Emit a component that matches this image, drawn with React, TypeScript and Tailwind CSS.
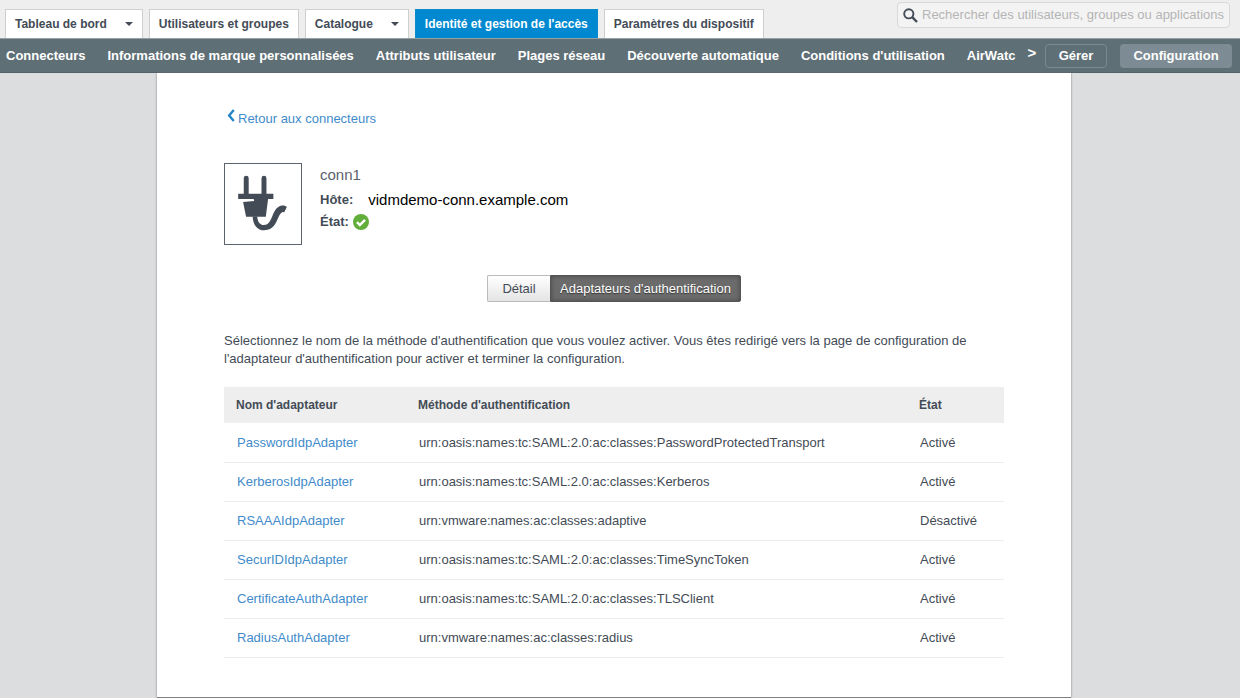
import { clsx } from "clsx";

interface Tab {
  label: string;
  menu?: boolean;
  active?: boolean;
}

interface Adapter {
  name: string;
  method: string;
  enabled: boolean;
}

const TABS: Tab[] = [
  { label: "Tableau de bord", menu: true },
  { label: "Utilisateurs et groupes" },
  { label: "Catalogue", menu: true },
  { label: "Identité et gestion de l'accès", active: true },
  { label: "Paramètres du dispositif" },
];

const SUB_NAV = [
  "Connecteurs",
  "Informations de marque personnalisées",
  "Attributs utilisateur",
  "Plages réseau",
  "Découverte automatique",
  "Conditions d'utilisation",
  "AirWatc",
];

const ADAPTERS: Adapter[] = [
  { name: "PasswordIdpAdapter", method: "urn:oasis:names:tc:SAML:2.0:ac:classes:PasswordProtectedTransport", enabled: true },
  { name: "KerberosIdpAdapter", method: "urn:oasis:names:tc:SAML:2.0:ac:classes:Kerberos", enabled: true },
  { name: "RSAAAIdpAdapter", method: "urn:vmware:names:ac:classes:adaptive", enabled: false },
  { name: "SecurIDIdpAdapter", method: "urn:oasis:names:tc:SAML:2.0:ac:classes:TimeSyncToken", enabled: true },
  { name: "CertificateAuthAdapter", method: "urn:oasis:names:tc:SAML:2.0:ac:classes:TLSClient", enabled: true },
  { name: "RadiusAuthAdapter", method: "urn:vmware:names:ac:classes:radius", enabled: true },
];

function PlugIcon() {
  return (
    <svg viewBox="0 0 231 240" className="h-full w-full" fill="#434b56" aria-hidden="true">
      <path d="M57 91V42a7.500 7.500 0 0 1 15 0v49zM111 91V42a7.500 7.500 0 0 1 15 0v49z" />
      <path d="M40 89h107v16h-16l-7 54H64l-9-45 34-3-2-6H40z" />
      <path d="M84 158c1 27 16 42 34 42 21 0 33-12 41-32 6-15 10-21 16-24l5 1 8-16c-7-5-17-6-25-1-10 6-15 18-20 31-6 15-12 25-25 25-11 0-19-9-20-26z" />
    </svg>
  );
}

function TopTabs() {
  return (
    <nav className="flex items-end gap-[6px] pt-[9px] pl-[5px]">
      {TABS.map((tab) => (
        <button
          key={tab.label}
          className={clsx(
            "flex h-[29px] items-center border border-b-0 px-[9px] text-[12px] font-bold whitespace-nowrap",
            tab.active
              ? "border-[#0a8bcd] bg-[#0089d0] text-white"
              : "border-[#cfcfcf] bg-white text-[#434b56]",
          )}
        >
          {tab.label}
          {tab.menu && (
            <svg viewBox="0 0 8 4" className="ml-[18px] h-1 w-2" fill="#434b56" aria-hidden="true">
              <path d="M0 0h8L4 4z" />
            </svg>
          )}
        </button>
      ))}
    </nav>
  );
}

function SearchBox() {
  return (
    <label className="mt-[2px] mr-[10px] flex h-[26px] w-[333px] items-center gap-1 rounded-[4px] border border-[#d9d9d9] bg-[#f3f3f3] pl-[5px]">
      <svg viewBox="0 0 15 15" className="h-[15px] w-[15px] shrink-0" fill="none" stroke="#434b56" aria-hidden="true">
        <circle cx="5.8" cy="5.8" r="4.6" strokeWidth="1.9" />
        <path d="M9.2 9.2l4.8 4.8" strokeWidth="2.4" />
      </svg>
      <input
        type="text"
        aria-label="Rechercher"
        placeholder="Rechercher des utilisateurs, groupes ou applications"
        className="min-w-0 flex-1 bg-transparent text-[13px] outline-none placeholder:text-[#b5b5b5]"
      />
    </label>
  );
}

function SubNav() {
  return (
    <div className="flex h-[35px] items-center border-t border-b border-t-[#97a1a5] border-b-[#51616a] bg-[#5f6f76] pr-2 pl-[6px] text-[13px] font-bold text-white">
      <nav className="flex gap-[22px] whitespace-nowrap">
        {SUB_NAV.map((item) => (
          <a key={item} href="#">
            {item}
          </a>
        ))}
      </nav>
      <button className="ml-3 pb-1 text-[15px]" aria-label="Suivant">&gt;</button>
      <div className="ml-auto flex gap-[13px]">
        <button className="h-6 w-[62px] rounded-[4px] border border-[#7b8a91]">Gérer</button>
        <button className="h-6 w-[112px] rounded-[4px] bg-[#7d8c94]">Configuration</button>
      </div>
    </div>
  );
}

function ConnectorSummary() {
  return (
    <section className="mt-[35px] flex gap-[18px]">
      <div className="h-[82px] w-[78px] border border-[#5c636d]">
        <PlugIcon />
      </div>
      <div className="text-[#434b56]">
        <h1 className="text-[15px] leading-6 text-[#5a616b]">conn1</h1>
        <dl className="mt-[2px] text-[13px] leading-[22px]">
          <div className="flex gap-[15px]">
            <dt className="font-bold">Hôte:</dt>
            <dd className="text-[15px] text-black">vidmdemo-conn.example.com</dd>
          </div>
          <div className="flex items-center gap-1">
            <dt className="font-bold">État:</dt>
            <dd>
              <svg viewBox="0 0 16 16" className="h-4 w-4" role="img" aria-label="OK">
                <circle cx="8" cy="8" r="8" fill="#62ae3a" />
                <path d="M4 8.2l2.8 2.8L12 5.8" fill="none" stroke="#fff" strokeWidth="2.4" />
              </svg>
            </dd>
          </div>
        </dl>
      </div>
    </section>
  );
}

function AdapterTable() {
  return (
    <table className="mt-[19px] w-full table-fixed text-left text-[13px]">
      <colgroup>
        <col className="w-[182px]" />
        <col />
        <col className="w-[97px]" />
      </colgroup>
      <thead>
        <tr className="h-9 bg-[#eeeeee] text-[12px]">
          <th className="px-3">Nom d'adaptateur</th>
          <th className="px-3">Méthode d'authentification</th>
          <th className="px-3">État</th>
        </tr>
      </thead>
      <tbody>
        {ADAPTERS.map((a) => (
          <tr key={a.name} className="h-[39px] border-b border-[#ececec]">
            <td className="px-[13px]">
              <a href="#" className="text-[#428bca]">{a.name}</a>
            </td>
            <td className="px-[13px]">{a.method}</td>
            <td className="px-[13px]">{a.enabled ? "Activé" : "Désactivé"}</td>
          </tr>
        ))}
      </tbody>
    </table>
  );
}

export default function App() {
  return (
    <div className="min-h-screen bg-[#dcdddf] font-['Liberation_Sans',Arial,sans-serif] text-[#434b56]">
      <header>
        <div className="flex items-start justify-between bg-[#eeeeee]">
          <TopTabs />
          <SearchBox />
        </div>
        <SubNav />
      </header>

      <div className="pr-3">
        <main className="mx-auto max-w-[914px] border-b border-[#808080] bg-white px-[67px] pt-9 pb-[39px] shadow-[0_0_2px_#777]">
          <a href="#" className="flex items-center gap-[3px] pl-[3px] text-[13px] leading-[18px] text-[#428bca]">
            <svg viewBox="0 0 8 14" className="mb-[6px] h-[13px] w-2" fill="none" stroke="#2385c8" strokeWidth="2.6" aria-hidden="true">
              <path d="M7 1L2 7l5 6" />
            </svg>
            Retour aux connecteurs
          </a>

          <ConnectorSummary />

          <div className="mt-[30px] flex justify-center text-[13px]">
            <button className="h-[27px] w-[63px] rounded-l-[2px] border border-r-0 border-[#bbbbbb] bg-linear-to-b from-white to-[#e4e4e4]">
              Détail
            </button>
            <button className="h-[27px] w-[191px] rounded-r-[2px] border border-[#555555] bg-[#6b6b6b] text-white shadow-[inset_0_0_4px_#444] text-shadow-[0_1px_1px_#333]">
              Adaptateurs d'authentification
            </button>
          </div>

          <p className="mt-[30px] text-[13px] leading-[18px]">
            Sélectionnez le nom de la méthode d'authentification que vous voulez activer. Vous êtes redirigé vers la
            page de configuration de l'adaptateur d'authentification pour activer et terminer la configuration.
          </p>

          <AdapterTable />
        </main>
      </div>
    </div>
  );
}
